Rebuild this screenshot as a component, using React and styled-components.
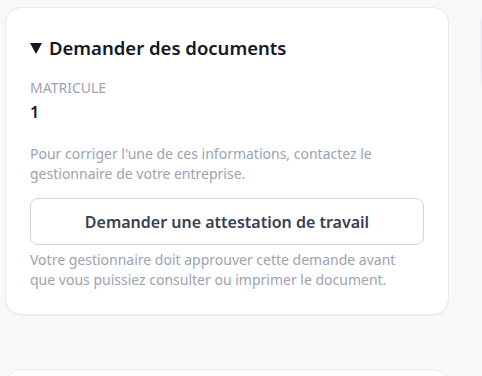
import React from 'react'
import styled, { createGlobalStyle } from 'styled-components'

const GlobalStyle = createGlobalStyle`
    html, body {
        margin: 0;
        padding: 0;
        background-color: #f7f8fa;
        font-family: "Noto Sans", "Open Sans", sans-serif;
        overflow: hidden;
    }
`;

const Page = styled.div`
    display: grid;
    grid-template-columns: 444px 444px;
    column-gap: 32px;
    row-gap: 54px;
    align-items: start;
    padding: 7px 0 0 5px;
    width: 1000px;
`;

const Card = styled.div`
    background-color: #ffffff;
    border: 1px solid #e8eaee;
    border-radius: 16px;
    box-shadow: 0 1px 2px rgba(16, 24, 40, 0.04);
    padding: ${p => p.$empty ? '0' : '24px'};
    height: ${p => p.$height || 'auto'};
    box-sizing: border-box;
`;

const Details = styled.details`
    & > summary {
        list-style: none;
        cursor: pointer;
        display: flex;
        align-items: center;
        gap: 7px;
        font-size: 18.5px;
        font-weight: 600;
        color: #111827;
        line-height: 32px;
        margin-bottom: 14px;
    }
    & > summary::-webkit-details-marker {
        display: none;
    }
`;

const Marker = styled.span`
    width: 0;
    height: 0;
    border-left: 6px solid transparent;
    border-right: 6px solid transparent;
    border-top: 11px solid #111827;
    margin-top: 1px;
`;

const Label = styled.div`
    font-size: 14px;
    color: #9ca3af;
    text-transform: uppercase;
    line-height: 20px;
`;

const Value = styled.div`
    font-size: 16px;
    font-weight: 600;
    color: #111827;
    line-height: 24px;
    margin: 2px 0 20px;
`;

const Hint = styled.p`
    margin: 0;
    font-size: 14px;
    line-height: 20px;
    color: #9ca3af;
`;

const Button = styled.button`
    display: block;
    width: 100%;
    height: 47px;
    margin: 14px 0 5px;
    background: #ffffff;
    border: 1px solid #d1d5db;
    border-radius: 8px;
    font-family: inherit;
    font-size: 16px;
    font-weight: 600;
    color: #374151;
    cursor: pointer;
`;

const App = () => {
    return (
        <>
            <GlobalStyle />
            <Page>
                <Card>
                    <Details open>
                        <summary><Marker />Demander des documents</summary>
                        <Label>Matricule</Label>
                        <Value>1</Value>
                        <Hint>Pour corriger l'une de ces informations, contactez le gestionnaire de votre entreprise.</Hint>
                        <Button>Demander une attestation de travail</Button>
                        <Hint>Votre gestionnaire doit approuver cette demande avant que vous puissiez consulter ou imprimer le document.</Hint>
                    </Details>
                </Card>
                <Card $empty $height="88px" />
                <Card $empty $height="120px" />
            </Page>
        </>
    )
}

export default App
